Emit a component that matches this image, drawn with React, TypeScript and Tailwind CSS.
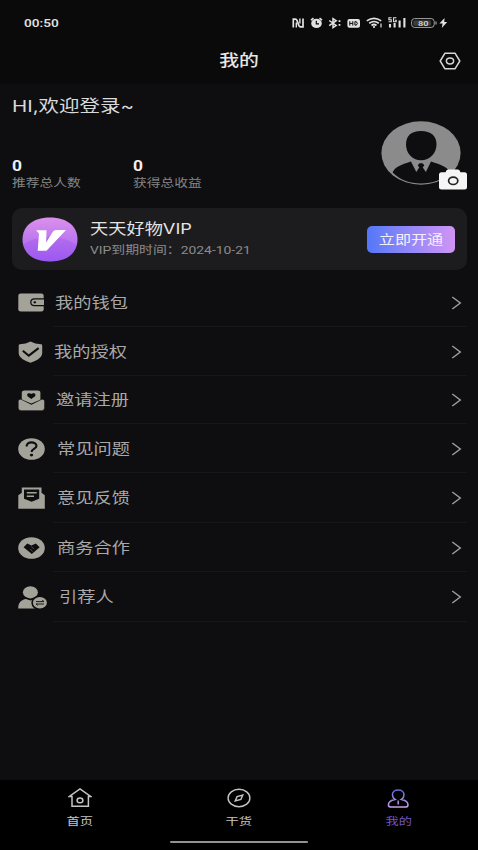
import type { ReactNode } from "react";
import clsx from "clsx";

// the UI text is wide: every label is drawn at 124% of its width
const Label = ({ children, className, center }: { children: ReactNode; className?: string; center?: boolean }) => (
  <span className={clsx("block w-max whitespace-nowrap scale-x-[1.24]", center ? "origin-center" : "origin-left", className)}>
    {children}
  </span>
);

const StatusIcons = () => (
  <svg width="158" height="16" viewBox="290 15 158 16" fill="none" stroke="#e2e2e2">
    {/* nfc */}
    <path d="M293.3 27.6V19.1H295.2Q296.6 19.1 297 20.4L298.8 25.4Q299.3 26.8 300.6 26.8H303V18.4" strokeWidth="1.7" />
    <path d="M296.3 22.5V27.6M299.9 18.4V23.6" strokeWidth="1.4" />
    {/* alarm */}
    <ellipse cx="316.5" cy="23.4" rx="5.3" ry="4.7" fill="#e2e2e2" stroke="none" />
    <path d="M311 20.2L313.5 18.2M322 20.2L319.5 18.2" strokeWidth="1.6" />
    <path d="M316.3 20.8V23.8H319" stroke="#0a0a0b" strokeWidth="1.2" />
    {/* bluetooth */}
    <path d="M329.2 20.5L336.2 25.4L333 27.6V18.6L336.2 20.7L329.2 25.6" strokeWidth="1.5" />
    <path d="M339.5 20.2V22M339.5 24V25.8" strokeWidth="1.8" />
    {/* hd */}
    <rect x="347.4" y="19" width="12.6" height="8.8" rx="2" fill="#e2e2e2" stroke="none" />
    <path d="M349.8 21.2V25.6M352.8 21.2V25.6M349.8 23.4H352.8M354.9 21.7V25.1H356.4Q358.2 23.4 356.4 21.7Z" stroke="#0a0a0b" strokeWidth="1" />
    {/* wifi */}
    <path d="M366.8 20.9Q374 15.8 381.2 20.9M369.2 23.3Q374 19.7 378.8 23.3M371.5 25.5Q374 23.5 376.5 25.5" strokeWidth="1.7" />
    <circle cx="374" cy="27" r="1.1" fill="#e2e2e2" stroke="none" />
    <path d="M381 23.5V27.5" strokeWidth="1.8" stroke="#9a9a9a" />
    {/* 5g signal */}
    <path d="M391.6 17.8H388.9V19.8H391.2V21.8H388.6M396.4 17.8H393.6V21.8H396.2V20.2H395" strokeWidth="1.1" />
    <path d="M390 24V27.6M394.6 23V27.6M399.6 20.5V27.6M404.4 18V27.6" strokeWidth="2.1" />
    {/* battery */}
    <rect x="411.6" y="18.6" width="22.6" height="8.8" rx="3" strokeWidth="1" stroke="#a5a5a5" />
    <rect x="413.2" y="20.2" width="18" height="5.6" rx="1.5" fill="#3d3d3d" stroke="none" />
    <path d="M436 21.6V24.6" strokeWidth="1.2" stroke="#a5a5a5" />
    <text x="418" y="25.8" fontSize="7.6" fontWeight="600" textLength="10.5" lengthAdjust="spacingAndGlyphs" fontFamily="Roboto, sans-serif" fill="#d0d0d0" stroke="none">80</text>
    <path d="M444.6 18L439.4 23.6H442.6L441.8 28L447.2 22H444.2Z" fill="#e2e2e2" stroke="none" />
  </svg>
);

const Avatar = () => (
  <div className="relative h-[64px] w-[80px]">
    <svg width="80" height="64" viewBox="0 0 80 64">
      <ellipse cx="40" cy="32" rx="39.6" ry="31.7" fill="#8b8b8b" />
      <path d="M40 10C50 10 55.5 15 55.5 23.5C55.5 32 49 39.3 40 39.3S25 32 25 23.5C25 15 30 10 40 10Z" fill="#0e0e10" />
      <path d="M30 40.5L35.3 51L38.2 46.6L36.8 44.3L38.5 42.3H41.5L43.3 44.3L41.8 46.6L44.9 51L50 40.5C60 43.5 67 46.5 68.8 51.5C61.5 59 51.5 62.4 40 62.4S18.8 59 11.6 51.5C13.5 46.5 20 43.5 30 40.5Z" fill="#0e0e10" />
    </svg>
    <svg className="absolute left-[58px] top-[48px]" width="28" height="21" viewBox="0 0 28 21">
      <path d="M7 2.2Q7.4.5 9.2.5H18.8Q20.6.5 21 2.2L21.4 3.3H25.5Q28 3.3 28 5.8V18Q28 20.5 25.5 20.5H2.5Q0 20.5 0 18V5.8Q0 3.3 2.5 3.3H6.6Z" fill="#f5f5f5" />
      <ellipse cx="14.2" cy="11.8" rx="4.6" ry="3.7" fill="none" stroke="#222" strokeWidth="1.7" />
    </svg>
  </div>
);

const VipLogo = () => (
  <svg width="56" height="45" viewBox="0 0 56 45">
    <defs>
      <linearGradient id="vip" x1="0" y1="0" x2="0" y2="1">
        <stop offset="0" stopColor="#dc91ea" />
        <stop offset="1" stopColor="#a05ff5" />
      </linearGradient>
      <clipPath id="vipClip">
        <path d="M28 .5C46 .5 55.5 10 55.5 22.5S46 44.5 28 44.5S.5 35 .5 22.5S10 .5 28 .5Z" />
      </clipPath>
    </defs>
    <g clipPath="url(#vipClip)">
      <rect width="56" height="45" fill="url(#vip)" />
      <path d="M0 28Q14 19 28 20Q44 20 56 29V45H0Z" fill="#8a43e8" opacity=".25" />
    </g>
    <path d="M14 13.2H24.5L24.2 25.5L30.5 15.2Q31.8 13 34.5 13H44L24.5 33.8H15.7L17 16.5Z" fill="#fff" />
  </svg>
);

const G = "#a3a399";
const BG = "#0e0e10";

const WalletIcon = () => (
  <svg width="26" height="19" viewBox="0 0 26 19">
    <rect x=".3" y=".4" width="25.4" height="18.2" rx="2.4" fill={G} />
    <path d="M26 5.9H16.5Q12.8 5.9 12.8 9.3T16.5 12.7H26" fill={G} stroke={BG} strokeWidth="1.3" />
    <ellipse cx="16.8" cy="9.3" rx="1.4" ry="1.1" fill={BG} />
  </svg>
);
const ShieldIcon = () => (
  <svg width="25" height="22" viewBox="0 0 25 22">
    <path d="M12.5.4Q17 2.9 23 3.2Q24.2 3.3 24.2 4.4V12C24.2 17 17.5 20.2 12.5 21.7C7.5 20.2.7 17 .7 12V4.4Q.7 3.3 2 3.2Q8 2.9 12.5.4Z" fill={G} />
    <path d="M4.8 9.7L10.8 14.7L20.6 7.2" fill="none" stroke={BG} strokeWidth="2.1" />
  </svg>
);
const InviteIcon = () => (
  <svg width="27" height="21" viewBox="0 0 27 21">
    <path d="M3.8 10V2.8Q3.8.5 6.6.5H19.6Q22.4.5 22.4 2.8V10L13.3 13.6Z" fill={G} />
    <path d="M13.3 9L9.5 6.2Q8.4 3.6 10.8 3.2Q12.4 2.9 13.3 4.1Q14.2 2.9 15.8 3.2Q18.2 3.6 17.1 6.2Z" fill={BG} />
    <path d="M.2 11.3Q.2 8.8 3 9.2L13.4 14.4L23.8 9.2Q26.6 8.8 26.6 11.3V17.8Q26.6 20.7 23.6 20.7H3.2Q.2 20.7.2 17.8Z" fill={G} stroke={BG} strokeWidth=".6" />
  </svg>
);
const HelpIcon = () => (
  <svg width="27" height="22" viewBox="0 0 27 22">
    <ellipse cx="13.5" cy="11" rx="13.3" ry="10.8" fill={G} />
    <path d="M8.6 8.4C8.6 5.8 10.8 4.4 13.5 4.4S18.5 5.8 18.5 8C18.5 10.7 13.6 10.5 13.6 14.1" fill="none" stroke={BG} strokeWidth="2.1" />
    <ellipse cx="13.5" cy="17.1" rx="1.7" ry="1.3" fill={BG} />
  </svg>
);
const FeedbackIcon = () => (
  <svg width="27" height="22" viewBox="0 0 27 22">
    <path d="M.3 8.2L3.8 5.7V.4H23.5V5.7L26.8 8.2V21.7H.3Z" fill={G} />
    <path d="M6 2.6H21.2V11.8L13.6 14.8L6 11.8Z" fill={BG} />
    <path d="M8.8 5.7H18.7M8.8 9.3H16" stroke={G} strokeWidth="1.6" />
  </svg>
);
const PartnerIcon = () => (
  <svg width="27" height="22" viewBox="0 0 27 22">
    <ellipse cx="13.5" cy="11" rx="13.3" ry="10.8" fill={G} />
    <path d="M5.6 10.3L9.3 6.6L13.4 8.6L17.8 6.6L21.7 10.3L13.8 17Z" fill={BG} />
    <path d="M13.4 9.4L16 12.2M12.4 12L14.6 14.6" stroke="#4a4a46" strokeWidth="1" />
  </svg>
);
const ReferrerIcon = () => (
  <svg width="30" height="23" viewBox="0 0 30 23">
    <ellipse cx="12.4" cy="6.3" rx="7.5" ry="6.1" fill={G} />
    <path d="M.2 22.6C.2 16.5 3.5 13.6 8 13L12.4 14.4L17 13L20 14V22.6Z" fill={G} />
    <ellipse cx="21.9" cy="16.8" rx="7.8" ry="6.6" fill={G} stroke={BG} strokeWidth="1.6" />
    <path d="M18 15.6H26L24.2 14.2M26 18H18L19.8 19.4" fill="none" stroke={BG} strokeWidth=".9" />
  </svg>
);

const menu = [
  { text: "我的钱包", icon: <WalletIcon />, className: "h-[49px] gap-[11px]" },
  { text: "我的授权", icon: <ShieldIcon />, className: "h-[49px] gap-[11px]" },
  { text: "邀请注册", icon: <InviteIcon />, className: "h-[48px] gap-[11px]" },
  { text: "常见问题", icon: <HelpIcon />, className: "h-[49px] gap-[12px]" },
  { text: "意见反馈", icon: <FeedbackIcon />, className: "h-[50px] gap-[12px]" },
  { text: "商务合作", icon: <PartnerIcon />, className: "h-[49px] gap-[12px]" },
  { text: "引荐人", icon: <ReferrerIcon />, className: "h-[50px] gap-[11px]" },
];

const MenuRow = ({ text, icon, className }: { text: string; icon: ReactNode; className: string }) => (
  <div className={clsx("relative flex items-center pl-[17.5px] pr-[16px]", className)}>
    {icon}
    <Label className="text-[14.7px] leading-[22px] text-[#a9a9a9]">{text}</Label>
    <svg className="ml-auto" width="11" height="14" viewBox="0 0 11 14" fill="none" stroke="#a0a0a0" strokeWidth="1.4">
      <path d="M1.3 1L9.3 7L1.3 13" />
    </svg>
    <div className="absolute bottom-0 left-[53px] right-[11px] h-px bg-[#17171a]" />
  </div>
);

const Stat = ({ value, label }: { value: string; label: string }) => (
  <div className="w-[121px]">
    <Label className="text-[14px] font-bold leading-[18px] text-[#f0f0f0]">{value}</Label>
    <Label className="mt-px text-[11.1px] leading-[16px] text-[#858585]">{label}</Label>
  </div>
);

const Tab = ({ text, icon, active }: { text: string; icon: ReactNode; active?: boolean }) => (
  <div className="flex flex-1 flex-col items-center pt-[7px]">
    {icon}
    <Label center className={clsx("mt-[6px] text-[10.7px] leading-[16px]", active ? "text-[#6e55c8]" : "text-[#c4c4c4]")}>
      {text}
    </Label>
  </div>
);

const App = () => {
  return (
    <div className="flex h-[850px] w-[478px] flex-col overflow-hidden bg-[#0e0e10] font-[Roboto,'Noto_Sans_CJK_SC',sans-serif]">
      <header className="h-[84px] bg-[#0a0a0b]">
        <div className="flex h-[38px] items-start justify-between pl-[24px] pr-[30px] pt-[15px]">
          <Label className="pt-px text-[11px] font-semibold leading-[16px] text-[#dedede]">00:50</Label>
          <StatusIcons />
        </div>
        <div className="grid grid-cols-3 items-center pt-[10px]">
          <span />
          <div className="flex justify-center">
            <Label center className="pt-px text-[16px] font-medium leading-[24px] text-[#e6e6e6]">我的</Label>
          </div>
          <svg className="mr-[17px] justify-self-end" width="22" height="18" viewBox="0 0 22 18" fill="none" stroke="#d6d6d6" strokeWidth="1.5">
            <path d="M6 1.2H16L20.8 9L16 16.8H6L1.2 9Z" strokeLinejoin="round" />
            <ellipse cx="11" cy="9" rx="3.6" ry="2.9" />
          </svg>
        </div>
      </header>

      <section className="flex h-[124px] justify-between pl-[12px] pr-[17px]">
        <div>
          <Label className="pt-[9px] font-[Inter,'Noto_Sans_CJK_SC',sans-serif] text-[16.5px] leading-[26px] text-[#dadada]">HI,欢迎登录~</Label>
          <div className="mt-[38px] flex">
            <Stat value="0" label="推荐总人数" />
            <Stat value="0" label="获得总收益" />
          </div>
        </div>
        <div className="pt-[37px]">
          <Avatar />
        </div>
      </section>

      <section className="ml-[12px] mr-[11px] flex h-[62px] items-center rounded-[10px] bg-[#1c1c1e] pl-[10px] pr-[12px]">
        <VipLogo />
        <div className="ml-[12px] flex-1">
          <Label className="font-[Inter,'Noto_Sans_CJK_SC',sans-serif] text-[14.7px] leading-[22px] text-[#e4e4e4]">天天好物VIP</Label>
          <Label className="pt-px text-[11.2px] leading-[20px] text-[#8b8b8b]">VIP到期时间：2024-10-21</Label>
        </div>
        <button type="button" className="flex h-[27px] w-[88px] items-center justify-center rounded-[5px] bg-linear-to-r from-[#5277f8] to-[#d094f4]">
          <Label center className="pt-px text-[13px] leading-[20px] text-[#f2f0ff]">立即开通</Label>
        </button>
      </section>

      <section className="pt-[8px]">
        {menu.map((item) => (
          <MenuRow key={item.text} {...item} />
        ))}
      </section>

      <footer className="relative mt-auto flex h-[70px] bg-black">
        <Tab
          text="首页"
          icon={
            <svg width="24" height="21" viewBox="0 0 24 21" fill="none" stroke="#c4c4c4" strokeWidth="1.5">
              <path d="M1 9.6H4V19.2H20.4V9.6H23L12 1.8Z" />
              <ellipse cx="12" cy="13.4" rx="2.9" ry="2.3" />
            </svg>
          }
        />
        <Tab
          text="干货"
          icon={
            <svg width="24" height="21" viewBox="0 0 24 21" fill="none" stroke="#c4c4c4" strokeWidth="1.4">
              <ellipse cx="12" cy="11" rx="10.9" ry="8.7" />
              <path d="M15.8 8L13.9 12.3L8.2 14L10.1 9.7Z" />
            </svg>
          }
        />
        <Tab
          active
          text="我的"
          icon={
            <svg width="24" height="21" viewBox="0 0 24 21" fill="none" stroke="url(#me)" strokeWidth="1.5">
              <defs>
                <linearGradient id="me" x1="0" y1="0" x2="0" y2="21" gradientUnits="userSpaceOnUse">
                  <stop offset="0.1" stopColor="#5f68d8" />
                  <stop offset="1" stopColor="#cfa3e6" />
                </linearGradient>
              </defs>
              <path d="M9 12.4C7.2 11.2 6.4 9.8 6.4 7.8C6.4 5 8.8 3.1 12.2 3.1S18 5 18 7.8C18 9.8 17.2 11.2 15.4 12.4C19 13 22 15 22 17.8Q22 20 20 20H4.4Q2.4 20 2.4 17.8C2.4 15 5.4 13 9 12.4Z" />
              <path d="M12.2 13.6V17.4" />
            </svg>
          }
        />
        <div className="absolute bottom-[7px] left-[170px] h-[2px] w-[138px] rounded-full bg-[#929292]" />
      </footer>
    </div>
  );
};

export default App;
